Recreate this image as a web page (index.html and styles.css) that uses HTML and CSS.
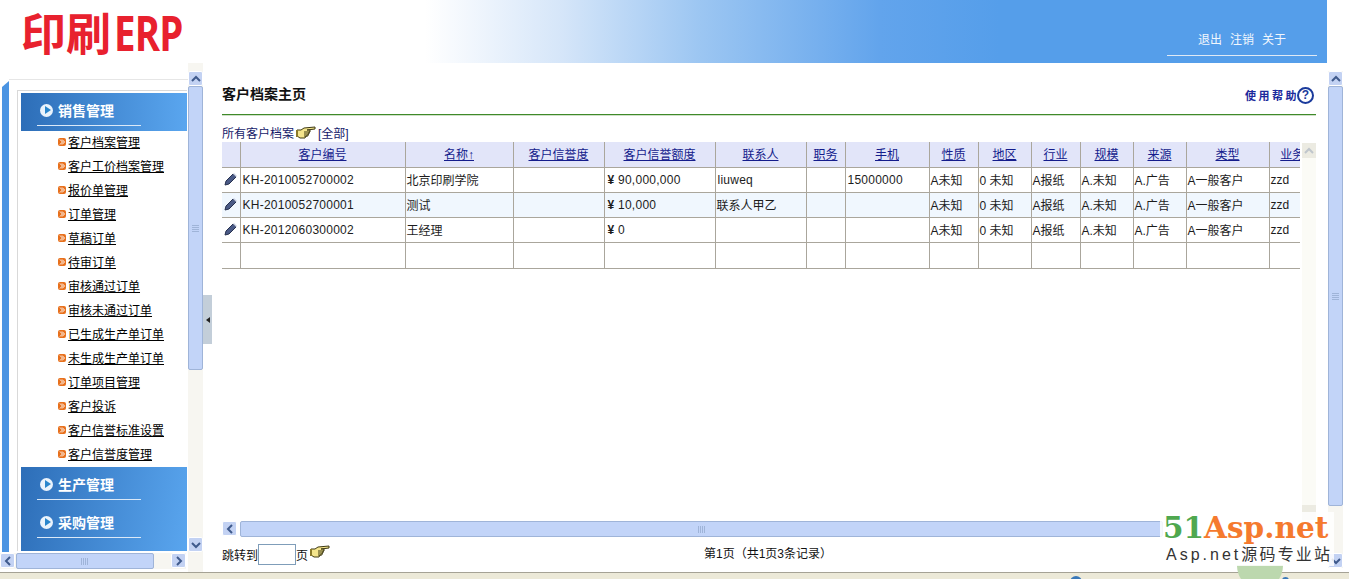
FILE: index.html
```html
<!DOCTYPE html>
<html lang="zh-CN">
<head>
    <meta charset="UTF-8">
    <title>印刷ERP</title>
    <link rel="stylesheet" href="styles.css">
</head>
<body>
    <svg class="defs" width="0" height="0">
        <symbol id="hand" viewBox="0 0 20 13">
            <path d="M1 4l4 0 3-2 11-1 0 2-8 1 3 0 0 2-1 0 0 2-1 0 0 2-2 0-1 2-5 0-3-2-1 0z" fill="#f4e58c" stroke="#3f3a14" stroke-width="1"/>
            <path d="M8 6h6M8 8h5M8 10h3" stroke="#3f3a14" stroke-width="1" fill="none"/>
            <path d="M1 4v7" stroke="#8a7a2a" stroke-width="2"/>
        </symbol>
        <symbol id="pencil" viewBox="0 0 14 14">
            <path d="M1 13l1-4 7-7 3 3-7 7z" fill="#4a5a86" stroke="#26304e" stroke-width="1"/>
            <path d="M9 2l1-1 3 3-1 1z" fill="#c8d0e4"/>
        </symbol>
        <symbol id="bullet" viewBox="0 0 8 8">
            <rect width="8" height="8" rx="2" fill="#e8701c"/>
            <path d="M2 1.5L4.5 4 2 6.5M4 1.5L6.5 4 4 6.5" fill="none" stroke="#fff" stroke-width="1"/>
        </symbol>
        <symbol id="up" viewBox="0 0 10 8"><path d="M1 6l4-4 4 4" fill="none" stroke="#3f5a8c" stroke-width="2"/></symbol>
        <symbol id="down" viewBox="0 0 10 8"><path d="M1 2l4 4 4-4" fill="none" stroke="#3f5a8c" stroke-width="2"/></symbol>
        <symbol id="left" viewBox="0 0 8 10"><path d="M6 1L2 5l4 4" fill="none" stroke="#3f5a8c" stroke-width="2"/></symbol>
        <symbol id="right" viewBox="0 0 8 10"><path d="M2 1l4 4-4 4" fill="none" stroke="#3f5a8c" stroke-width="2"/></symbol>
    </svg>

    <header class="top">
        <div class="logo">印刷<span class="logo-en">ERP</span></div>
        <div class="top-links">
            <span>退出</span><span>注销</span><span>关于</span>
        </div>
    </header>

    <div class="frames">
        <aside class="side">
            <div class="side-view">
                <div class="side-strip"></div>
                <div class="side-box">
                    <div class="side-inner">
                        <div class="menu-title first"><span class="dot"></span><span class="menu-name">销售管理</span></div>
                        <ul class="menu-list">
                            <li><svg width="8" height="8"><use href="#bullet"/></svg><a>客户档案管理</a></li>
                            <li><svg width="8" height="8"><use href="#bullet"/></svg><a>客户工价档案管理</a></li>
                            <li><svg width="8" height="8"><use href="#bullet"/></svg><a>报价单管理</a></li>
                            <li><svg width="8" height="8"><use href="#bullet"/></svg><a>订单管理</a></li>
                            <li><svg width="8" height="8"><use href="#bullet"/></svg><a>草稿订单</a></li>
                            <li><svg width="8" height="8"><use href="#bullet"/></svg><a>待审订单</a></li>
                            <li><svg width="8" height="8"><use href="#bullet"/></svg><a>审核通过订单</a></li>
                            <li><svg width="8" height="8"><use href="#bullet"/></svg><a>审核未通过订单</a></li>
                            <li><svg width="8" height="8"><use href="#bullet"/></svg><a>已生成生产单订单</a></li>
                            <li><svg width="8" height="8"><use href="#bullet"/></svg><a>未生成生产单订单</a></li>
                            <li><svg width="8" height="8"><use href="#bullet"/></svg><a>订单项目管理</a></li>
                            <li><svg width="8" height="8"><use href="#bullet"/></svg><a>客户投诉</a></li>
                            <li><svg width="8" height="8"><use href="#bullet"/></svg><a>客户信誉标准设置</a></li>
                            <li><svg width="8" height="8"><use href="#bullet"/></svg><a>客户信誉度管理</a></li>
                        </ul>
                        <div class="menu-rest">
                            <div class="menu-title"><span class="dot"></span><span class="menu-name">生产管理</span></div>
                            <div class="menu-title"><span class="dot"></span><span class="menu-name">采购管理</span></div>
                        </div>
                    </div>
                </div>
                <div class="vbar side-vbar">
                    <div class="btn"><svg width="10" height="8"><use href="#up"/></svg></div>
                    <div class="thumb-v side-thumb"><span class="grip-v"></span></div>
                    <div class="track"></div>
                    <div class="btn"><svg width="10" height="8"><use href="#down"/></svg></div>
                </div>
            </div>
            <div class="hbar side-hbar">
                <div class="btn"><svg width="8" height="10"><use href="#left"/></svg></div>
                <div class="thumb-h side-hthumb"><span class="grip-h"></span></div>
                <div class="track"></div>
                <div class="btn"><svg width="8" height="10"><use href="#right"/></svg></div>
            </div>
        </aside>

        <div class="split"><span class="split-handle"><i></i></span></div>

        <main class="main">
            <div class="page">
                <div class="title-row">
                    <h1>客户档案主页</h1>
                    <a class="help">使用帮助<span class="help-icon">?</span></a>
                </div>
                <div class="crumb">所有客户档案<svg class="hand" width="20" height="13"><use href="#hand"/></svg>[全部]</div>

                <div class="grid-area">
                    <div class="grid-clip">
                        <table class="grid">
                            <colgroup>
                                <col class="c18"><col class="c165"><col class="c108"><col class="c91"><col class="c111"><col class="c91"><col class="c39"><col class="c84"><col class="c49"><col class="c53"><col class="c49"><col class="c53"><col class="c53"><col class="c83"><col class="c58">
                            </colgroup>
                            <thead>
                                <tr>
                                    <th></th><th><a>客户编号</a></th><th><a>名称↑</a></th><th><a>客户信誉度</a></th><th><a>客户信誉额度</a></th><th><a>联系人</a></th><th><a>职务</a></th><th><a>手机</a></th><th><a>性质</a></th><th><a>地区</a></th><th><a>行业</a></th><th><a>规模</a></th><th><a>来源</a></th><th><a>类型</a></th><th><a>业务员</a></th>
                                </tr>
                            </thead>
                            <tbody>
                                <tr>
                                    <td class="edit"><svg width="14" height="14"><use href="#pencil"/></svg></td><td class="num">KH-2010052700002</td><td>北京印刷学院</td><td></td><td class="num"><b class="yen">¥</b> 90,000,000</td><td class="num">liuweq</td><td></td><td class="num">15000000</td><td>A未知</td><td>0 未知</td><td>A报纸</td><td>A.未知</td><td>A.广告</td><td>A一般客户</td><td>zzd</td>
                                </tr>
                                <tr class="alt">
                                    <td class="edit"><svg width="14" height="14"><use href="#pencil"/></svg></td><td class="num">KH-2010052700001</td><td>测试</td><td></td><td class="num"><b class="yen">¥</b> 10,000</td><td>联系人甲乙</td><td></td><td></td><td>A未知</td><td>0 未知</td><td>A报纸</td><td>A.未知</td><td>A.广告</td><td>A一般客户</td><td>zzd</td>
                                </tr>
                                <tr>
                                    <td class="edit"><svg width="14" height="14"><use href="#pencil"/></svg></td><td class="num">KH-2012060300002</td><td>王经理</td><td></td><td class="num"><b class="yen">¥</b> 0</td><td></td><td></td><td></td><td>A未知</td><td>0 未知</td><td>A报纸</td><td>A.未知</td><td>A.广告</td><td>A一般客户</td><td>zzd</td>
                                </tr>
                                <tr class="blank">
                                    <td></td><td></td><td></td><td></td><td></td><td></td><td></td><td></td><td></td><td></td><td></td><td></td><td></td><td></td><td></td>
                                </tr>
                            </tbody>
                        </table>
                    </div>
                    <div class="grid-vbar">
                        <div class="btn-off"><svg width="10" height="8"><use href="#up"/></svg></div>
                        <div class="track"></div>
                        <div class="btn-off"></div>
                    </div>
                </div>

                <div class="hbar grid-hbar">
                    <div class="btn"><svg width="8" height="10"><use href="#left"/></svg></div>
                    <div class="thumb-h grid-hthumb"><span class="grip-h"></span></div>
                </div>

                <div class="pager">
                    <div class="jump">跳转到<span class="jump-input"></span>页<svg class="hand hand-up" width="20" height="13"><use href="#hand"/></svg></div>
                    <div class="page-info">第1页（共1页3条记录）</div>
                </div>
            </div>
            <div class="vbar main-vbar">
                <div class="btn"><svg width="10" height="8"><use href="#up"/></svg></div>
                <div class="thumb-v main-thumb"><span class="grip-v"></span></div>
                <div class="track"></div>
                <div class="btn"><svg width="10" height="8"><use href="#down"/></svg></div>
            </div>
        </main>
    </div>

    <div class="status">
        <span class="status-globe"></span>
        <span class="status-green"></span>
        <span class="status-pin"></span>
    </div>

    <!-- watermark -->
    <div class="mark">
        <div class="mark-big"><span class="mark-green">51</span>Asp.net</div>
        <div class="mark-small"><span class="mark-latin">Asp.net</span>源码专业站</div>
    </div>
</body>
</html>
```

FILE: styles.css
```css
html, body {
    margin: 0;
    padding: 0;
    height: 579px;
    overflow: hidden;
}

body {
    position: relative;
    display: flex;
    flex-direction: column;
    width: 1349px;
    background: #fff;
    color: #111;
    font-family: "Liberation Sans", "Noto Sans CJK SC", sans-serif;
    font-size: 12px;
}

.defs {
    position: absolute;
}

/* Header */
.top {
    display: flex;
    justify-content: space-between;
    flex: none;
    width: 1327px;
    height: 63px;
    box-sizing: border-box;
    background: linear-gradient(90deg, #fff 0, #fff 425px, #d6e6f9 560px, #9cc6f2 700px, #62a4ec 880px, #559eea 1000px, #559eea 100%);
}

.logo {
    margin: 7px 0 0 21px;
    height: 50px;
    color: #e8212e;
    font-family: "Noto Sans CJK SC", sans-serif;
    font-size: 45px;
    font-weight: 700;
    line-height: 50px;
    white-space: nowrap;
}

.logo-en {
    display: inline-block;
    margin-left: 3px;
    font-family: "Open Sans", sans-serif;
    font-size: 48px;
    font-weight: 700;
    letter-spacing: -1px;
    transform: scaleX(.8);
    transform-origin: left center;
}

.top-links {
    display: flex;
    gap: 8px;
    align-self: flex-end;
    width: 119px;
    height: 26px;
    margin-right: 10px;
    margin-bottom: 7px;
    padding-left: 31px;
    box-sizing: content-box;
    border-bottom: 1px solid #dfe9f5;
    color: #f2f7fd;
    line-height: 22px;
}

/* Frames */
.frames {
    display: flex;
    flex: none;
    height: 509px;
}

.side {
    display: flex;
    flex-direction: column;
    flex: none;
    width: 203px;
    padding-top: 8px;
    box-sizing: border-box;
    background: linear-gradient(90deg, #fff 188px, #f7f6f1 188px);
}

.side-view {
    display: flex;
    flex: none;
    height: 481px;
}

.side-strip {
    flex: none;
    width: 7px;
    margin: 10px 0 0 2px;
    background: #4b94e2;
    clip-path: polygon(0 6px, 100% 0, 100% 100%, 0 100%);
}

.side-box {
    flex: none;
    width: 179px;
    height: 472px;
    margin-top: 8px;
    box-sizing: border-box;
    overflow: hidden;
    border-top: 1px solid #e6e6e6;
}

.side-inner {
    width: 170px;
    margin: 10px 0 0 8px;
    padding: 2px 0 0 3px;
    box-sizing: border-box;
    border-left: 1px solid #d9d9d9;
    border-top: 1px solid #d9d9d9;
}

.menu-title {
    display: flex;
    align-items: center;
    gap: 6px;
    position: relative;
    height: 38px;
    padding: 0 0 4px 19px;
    box-sizing: border-box;
    color: #fff;
    font-size: 14px;
    font-weight: 700;
}

.menu-title::after {
    content: "";
    position: absolute;
    left: 16px;
    width: 104px;
    bottom: 5px;
    height: 1px;
    background: #dbe9f8;
}

.first {
    background: linear-gradient(90deg, #2d6eb8, #5aa6ef);
}

.dot {
    display: flex;
    align-items: center;
    justify-content: center;
    flex: none;
    width: 13px;
    height: 13px;
    border-radius: 50%;
    background: #eaf3fc;
}

.dot::after {
    content: "";
    width: 0;
    height: 0;
    margin-left: 2px;
    border-top: 4px solid transparent;
    border-bottom: 4px solid transparent;
    border-left: 6px solid #2a86cc;
}

.menu-name {
    margin-left: -1px;
}

.menu-list {
    margin: 0;
    padding: 0 0 0 37px;
    list-style: none;
}

.menu-list li {
    display: flex;
    align-items: center;
    gap: 2px;
    height: 24px;
    padding-bottom: 4px;
    box-sizing: border-box;
}

.menu-list svg {
    flex: none;
    margin-top: 2px;
}

.menu-list a {
    color: #000;
    text-decoration: underline;
    white-space: nowrap;
}

.menu-rest {
    height: 93px;
    background: linear-gradient(100deg, #2d6eb8, #5aa6ef);
}

/* Scrollbars */
.vbar {
    display: flex;
    flex-direction: column;
    flex: none;
    width: 15px;
    background: #f7f6f1;
}

.hbar {
    display: flex;
    flex: none;
    height: 16px;
    background: #f7f6f1;
}

.btn {
    display: flex;
    align-items: center;
    justify-content: center;
    flex: none;
    width: 15px;
    height: 15px;
    box-sizing: border-box;
    border: 1px solid #fff;
    border-radius: 2px;
    background: #c3d2f3;
}

.thumb-v, .thumb-h {
    display: flex;
    align-items: center;
    justify-content: center;
    box-sizing: border-box;
    border: 1px solid #9fb4d8;
    border-radius: 2px;
    background: #c2d4f8;
}

.track {
    flex: 1;
}

.grip-v {
    width: 7px;
    height: 7px;
    background: repeating-linear-gradient(0deg, #9fb4d8 0 1px, transparent 1px 2px);
}

.grip-h {
    width: 8px;
    height: 7px;
    background: repeating-linear-gradient(90deg, #9fb4d8 0 1px, transparent 1px 2px);
}

.side-vbar {
    height: 481px;
}

.side-thumb {
    height: 284px;
}

.side-hbar {
    width: 186px;
    margin-top: 1px;
}

.side-hthumb {
    width: 138px;
    margin-left: 1px;
}

/* Splitter */
.split {
    display: flex;
    align-items: flex-start;
    flex: none;
    width: 9px;
    background: #fff;
}

.split-handle {
    display: flex;
    align-items: center;
    justify-content: center;
    width: 9px;
    height: 49px;
    margin-top: 232px;
    background: #c3ced9;
}

.split-handle i {
    width: 0;
    height: 0;
    border-top: 3px solid transparent;
    border-bottom: 3px solid transparent;
    border-right: 4px solid #222;
}

/* Main */
.main {
    display: flex;
    flex: 1;
    min-width: 0;
}

.page {
    display: flex;
    flex-direction: column;
    flex: none;
    width: 1094px;
    height: 509px;
    margin: 0 12px 0 10px;
    box-sizing: border-box;
}

.title-row {
    display: flex;
    align-items: center;
    justify-content: space-between;
    flex: none;
    height: 52px;
    padding-top: 9px;
    box-sizing: border-box;
    border-bottom: 1px solid #3f8a2a;
    box-shadow: 0 1px 0 #cfe0c8;
}

h1 {
    margin: 0;
    font-size: 14px;
    font-weight: 700;
    color: #111;
}

.help {
    display: flex;
    align-items: center;
    margin: 4px 2px 0 0;
    color: #1c2a9c;
    font-size: 11px;
    font-weight: 700;
    letter-spacing: 2.5px;
}

.help-icon {
    width: 13px;
    height: 13px;
    margin-left: -2px;
    border: 2px solid #1a3a9c;
    border-radius: 50%;
    color: #1a3a9c;
    font-size: 12px;
    line-height: 13px;
    letter-spacing: 0;
    text-align: center;
}

.crumb {
    display: flex;
    align-items: center;
    flex: none;
    height: 27px;
    padding-top: 7px;
    box-sizing: border-box;
    color: #151a6a;
}

.hand {
    flex: none;
    margin: 0 2px;
}

.grid-area {
    display: flex;
    flex: none;
    height: 379px;
}

.grid-clip {
    flex: none;
    width: 1078px;
    overflow: hidden;
}

.grid {
    width: 1105px;
    table-layout: fixed;
    border-collapse: collapse;
    border-bottom: 1px solid #aaa69c;
}

.c18 { width: 18px; }
.c165 { width: 165px; }
.c108 { width: 108px; }
.c91 { width: 91px; }
.c111 { width: 111px; }
.c39 { width: 39px; }
.c84 { width: 84px; }
.c49 { width: 49px; }
.c53 { width: 53px; }
.c83 { width: 83px; }
.c58 { width: 58px; }

.grid th {
    height: 25px;
    padding: 0 0 2px;
    box-sizing: border-box;
    background: #e2e5f9;
    border-left: 1px solid #aaa69c;
    border-bottom: 1px solid #aaa69c;
    font-weight: 400;
    text-align: center;
    white-space: nowrap;
}

.grid th:first-child, .grid td:first-child {
    border-left: 0;
}

.grid th a {
    color: #141c8c;
    text-decoration: underline;
}

.grid td {
    height: 25px;
    padding: 0 0 0 1px;
    box-sizing: border-box;
    border-left: 1px solid #aaa69c;
    border-bottom: 1px solid #aaa69c;
    overflow: hidden;
    white-space: nowrap;
    color: #1c1c1c;
}

.grid .num {
    padding-left: 2px;
    letter-spacing: .25px;
}

.alt td {
    background: #f0f7fe;
}

.blank td {
    height: 26px;
}

.edit svg {
    display: block;
    margin: 0 0 1px 1px;
}

.yen {
    margin-left: 1px;
}

.grid-vbar {
    display: flex;
    flex-direction: column;
    flex: none;
    width: 14px;
    height: 377px;
    margin: 1px 0 0 2px;
    background: #fbfbf6;
}

.btn-off {
    display: flex;
    align-items: center;
    justify-content: center;
    height: 15px;
    background: #ecebe2;
}

.btn-off svg {
    opacity: .25;
}

.grid-hbar {
    width: 941px;
    background: none;
}

.grid-hthumb {
    flex: 1;
    margin-left: 3px;
}

.pager {
    display: flex;
    align-items: center;
    position: relative;
    flex: none;
    height: 29px;
    padding-top: 6px;
    box-sizing: border-box;
}

.jump {
    display: flex;
    align-items: center;
}

.jump-input {
    display: block;
    width: 36px;
    height: 19px;
    border: 1px solid #7f9db9;
}

.hand-up {
    margin: -6px 0 0 2px;
}

.page-info {
    position: absolute;
    left: 482px;
    top: 7px;
}

.main-vbar {
    height: 497px;
    margin-top: 8px;
    background: #f7f6f1;
}

.main-thumb {
    flex: none;
    height: 420px;
}

.status {
    position: relative;
    flex: none;
    height: 7px;
    box-sizing: border-box;
    border-top: 1px solid #a5a295;
    background: #ece9d8;
}

.status-globe {
    position: absolute;
    left: 1070px;
    top: 3px;
    width: 12px;
    height: 12px;
    border-radius: 50%;
    background: #3a78b8;
}

.status-green {
    position: absolute;
    left: 1237px;
    top: -8px;
    width: 46px;
    height: 24px;
    border-radius: 0 0 24px 24px;
    background: #bcd8ae;
}

.status-pin {
    position: absolute;
    left: 1282px;
    top: 4px;
    width: 7px;
    height: 7px;
    border-radius: 50%;
    background: #3a78b8;
}

/* Watermark over the corner */
.mark {
    position: absolute;
    left: 1160px;
    top: 512px;
    width: 174px;
    height: 54px;
    background: rgba(255, 255, 255, .85);
}

.mark-big {
    padding-left: 3px;
    color: #f57a2e;
    font-family: "DejaVu Serif", serif;
    font-size: 29.5px;
    font-weight: 700;
    line-height: 32px;
    white-space: nowrap;
}

.mark-green {
    color: #4fa84f;
}

.mark-small {
    padding-left: 6px;
    color: #333;
    font-size: 16px;
    letter-spacing: 2.2px;
    line-height: 22px;
    white-space: nowrap;
}

.mark-latin {
    letter-spacing: 3px;
}
```
